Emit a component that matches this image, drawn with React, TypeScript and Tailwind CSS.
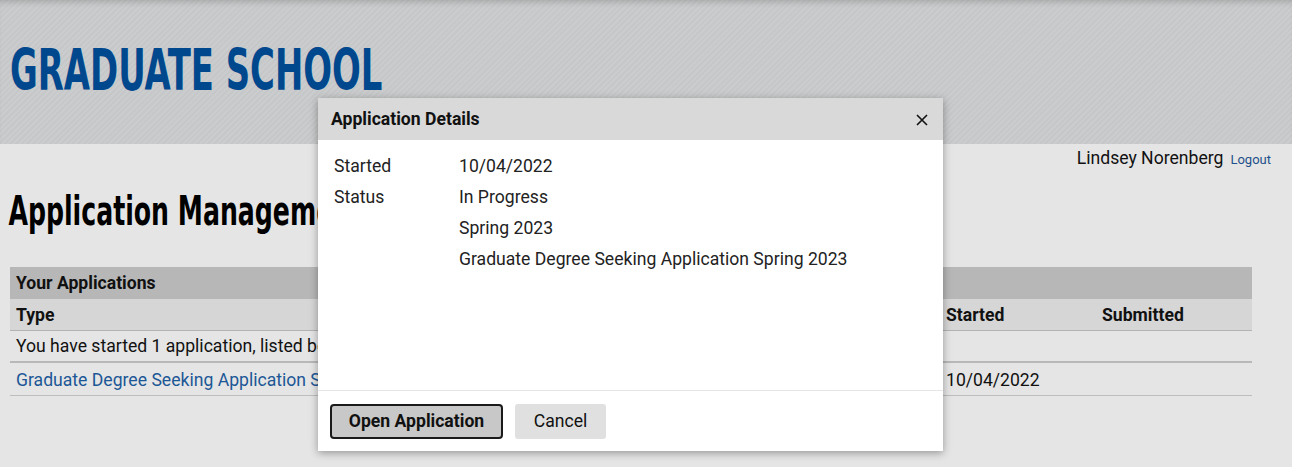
import React from "react";

const heading = { fontFamily: '"Liberation Sans Narrow", "DejaVu Sans Condensed", "Liberation Sans", sans-serif' };
const body = { fontFamily: 'Roboto, "Liberation Sans", sans-serif' };

export default function App() {
  return (
    <div className="relative min-h-[467px] w-full overflow-hidden bg-[#e5e5e5] text-[#111]" style={body}>
      <header className="h-[144px] bg-[repeating-linear-gradient(135deg,#c6c7c8_0px,#c6c7c8_2px,#cbcccd_2px,#cbcccd_4px)] shadow-[inset_0_6px_6px_-4px_rgba(0,0,0,0.18)] pl-[10px] pt-[38px]">
        <h1 className="inline-block origin-left scale-x-[0.66] text-[57px] font-bold leading-[64px] text-[#00488e] whitespace-nowrap" style={heading}>
          GRADUATE SCHOOL
        </h1>
      </header>

      <div className="flex justify-end items-baseline gap-[7px] pr-[21px] pt-[1px] h-[26px]">
        <span className="text-[17.6px] text-[#111]">Lindsey Norenberg</span>
        <span className="text-[13px] text-[#1d4f8a]">Logout</span>
      </div>

      <h2 className="inline-block origin-left scale-x-[0.70] pl-[12px] pt-[19px] text-[40px] font-bold leading-[44px] text-black whitespace-nowrap" style={heading}>
        Application Management
      </h2>

      <div className="mt-[34px] ml-[10px] mr-[40px] text-[17.6px]">
        <div className="h-[32px] flex items-center bg-[#b7b7b7] px-[6px] pt-[1px] font-bold">Your Applications</div>
        <div className="h-[32px] grid grid-cols-[930px_156px_1fr] items-center bg-[#d6d6d6] border-b border-[#b3b3b3] px-[6px] pt-[1px] font-bold">
          <span>Type</span>
          <span>Started</span>
          <span>Submitted</span>
        </div>
        <div className="h-[32px] flex items-center border-b-2 border-[#b8b8b8] px-[6px] pt-[1px]">
          You have started 1 application, listed below.
        </div>
        <div className="h-[33px] grid grid-cols-[930px_156px_1fr] items-center border-b border-[#bdbdbd] px-[6px] pt-[2px]">
          <span className="text-[#1c5796]">Graduate Degree Seeking Application Spring 2023</span>
          <span>10/04/2022</span>
          <span></span>
        </div>
      </div>

      <div className="absolute left-[318px] top-[98px] w-[625px] h-[353px] bg-white shadow-[0_2px_8px_rgba(0,0,0,0.35)] flex flex-col">
        <div className="h-[42px] bg-[#d9d9d9] flex items-center justify-between pl-[13px] pr-[15px] pt-[1px]">
          <span className="text-[17.6px] font-bold text-[#111]">Application Details</span>
          <svg width="12" height="12" viewBox="0 0 12 12" className="text-[#111]">
            <path d="M1 1L11 11M11 1L1 11" stroke="currentColor" strokeWidth="1.6" />
          </svg>
        </div>
        <div className="flex-1 pt-[11px] pl-[16px] text-[17.6px] text-[#222]">
          <div className="grid grid-cols-[125px_1fr] leading-[31px]">
            <span>Started</span>
            <span>10/04/2022</span>
            <span>Status</span>
            <span>In Progress</span>
            <span></span>
            <span>Spring 2023</span>
            <span></span>
            <span>Graduate Degree Seeking Application Spring 2023</span>
          </div>
        </div>
        <div className="h-[61px] border-t border-[#e6e6e6] flex items-center gap-[12px] pl-[12px]">
          <button className="h-[35px] w-[173px] rounded-[4px] border-2 border-[#1a1a1a] bg-[#c8c8c8] text-[17.6px] font-bold text-[#111]">
            Open Application
          </button>
          <button className="h-[35px] w-[91px] rounded-[3px] bg-[#e0e0e0] text-[17.6px] text-[#111]">
            Cancel
          </button>
        </div>
      </div>
    </div>
  );
}
